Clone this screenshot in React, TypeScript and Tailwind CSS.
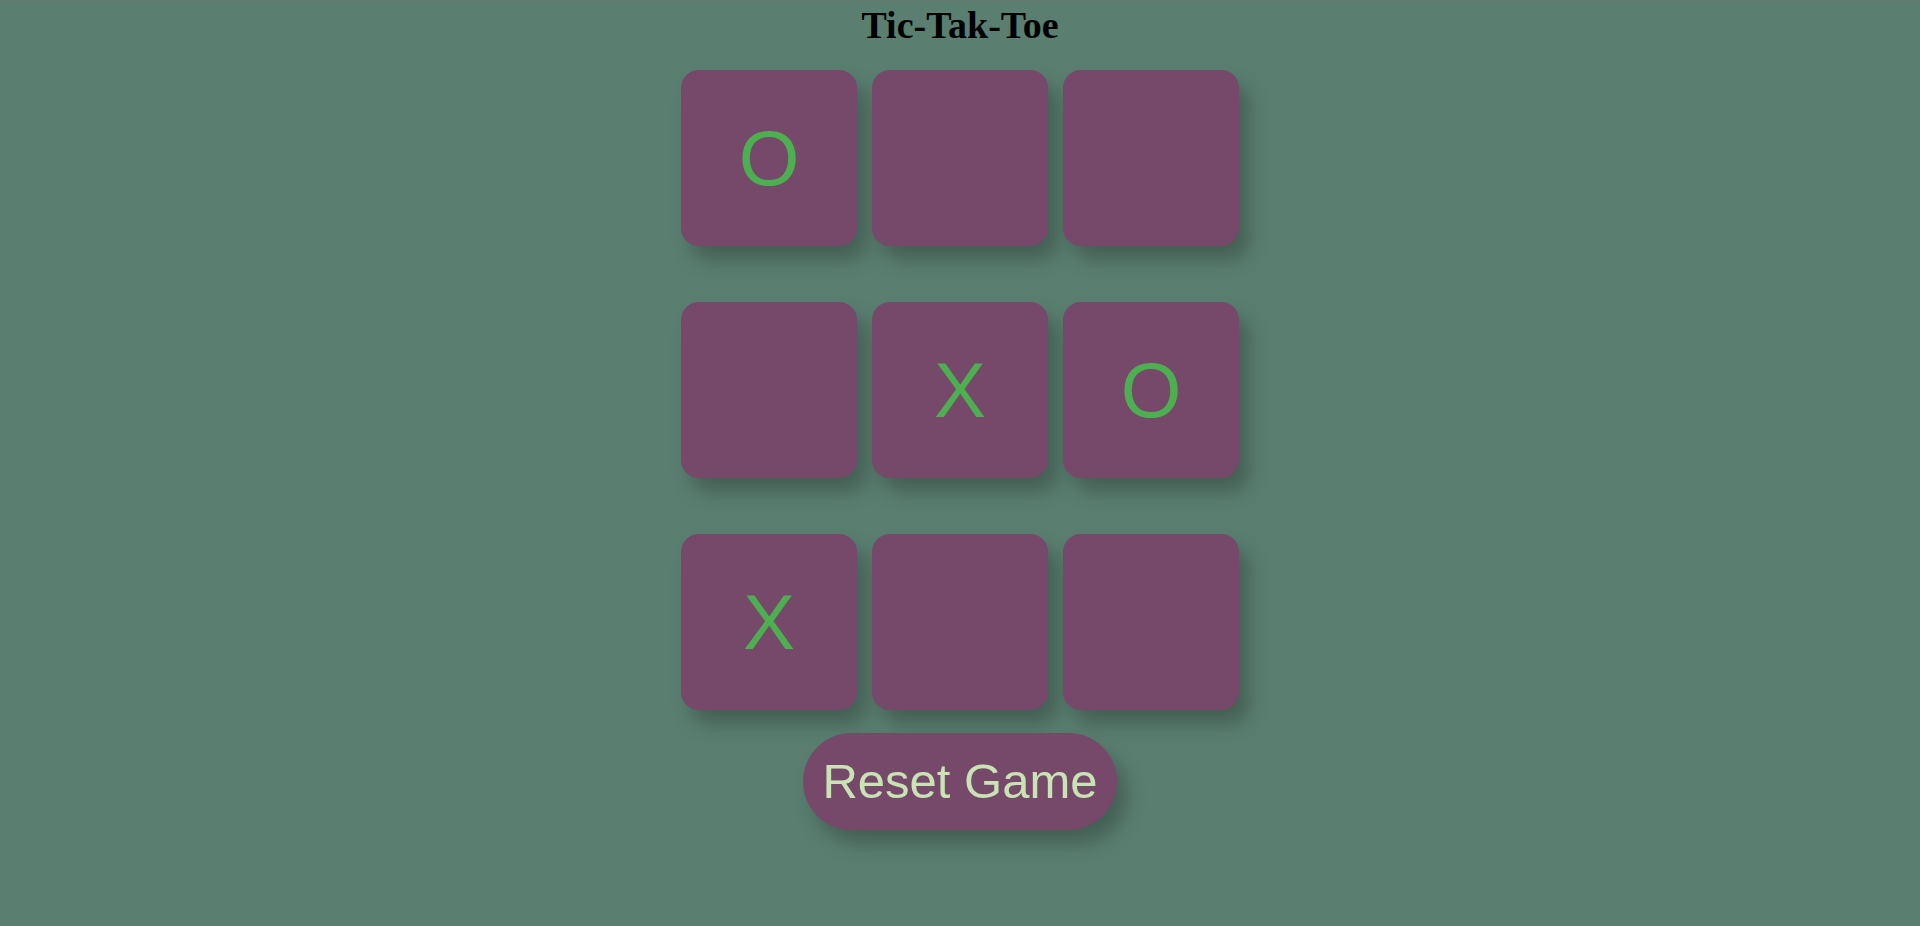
import React from "react";

const board = ["O", "", "", "", "X", "O", "X", "", ""];

export default function App() {
  return (
    <div className="min-h-[926px] w-full bg-[#5a7f70] flex flex-col items-center border-t-2 border-[#62796f]">
      <h1 className="mt-[2px] text-[38px] leading-[42px] font-bold text-black font-['Liberation_Serif','Times_New_Roman',serif]">
        Tic-Tak-Toe
      </h1>
      <div className="mt-[24px] grid grid-cols-[176px_176px_176px] gap-x-[15px] gap-y-[56px]">
        {board.map((v, i) => (
          <div
            key={i}
            className="w-[176px] h-[176px] rounded-[18px] bg-[#76486a] shadow-[10px_14px_20px_rgba(0,0,0,0.25)] flex items-center justify-center text-[78px] leading-none text-[#4caf50] font-['Liberation_Sans',Arial,sans-serif]"
          >
            {v}
          </div>
        ))}
      </div>
      <button className="mt-[23px] w-[314px] h-[97px] rounded-full bg-[#76486a] text-[49px] text-[#c8e4b4] shadow-[10px_14px_20px_rgba(0,0,0,0.25)] flex items-center justify-center font-['Liberation_Sans',Arial,sans-serif]">
        Reset Game
      </button>
    </div>
  );
}
